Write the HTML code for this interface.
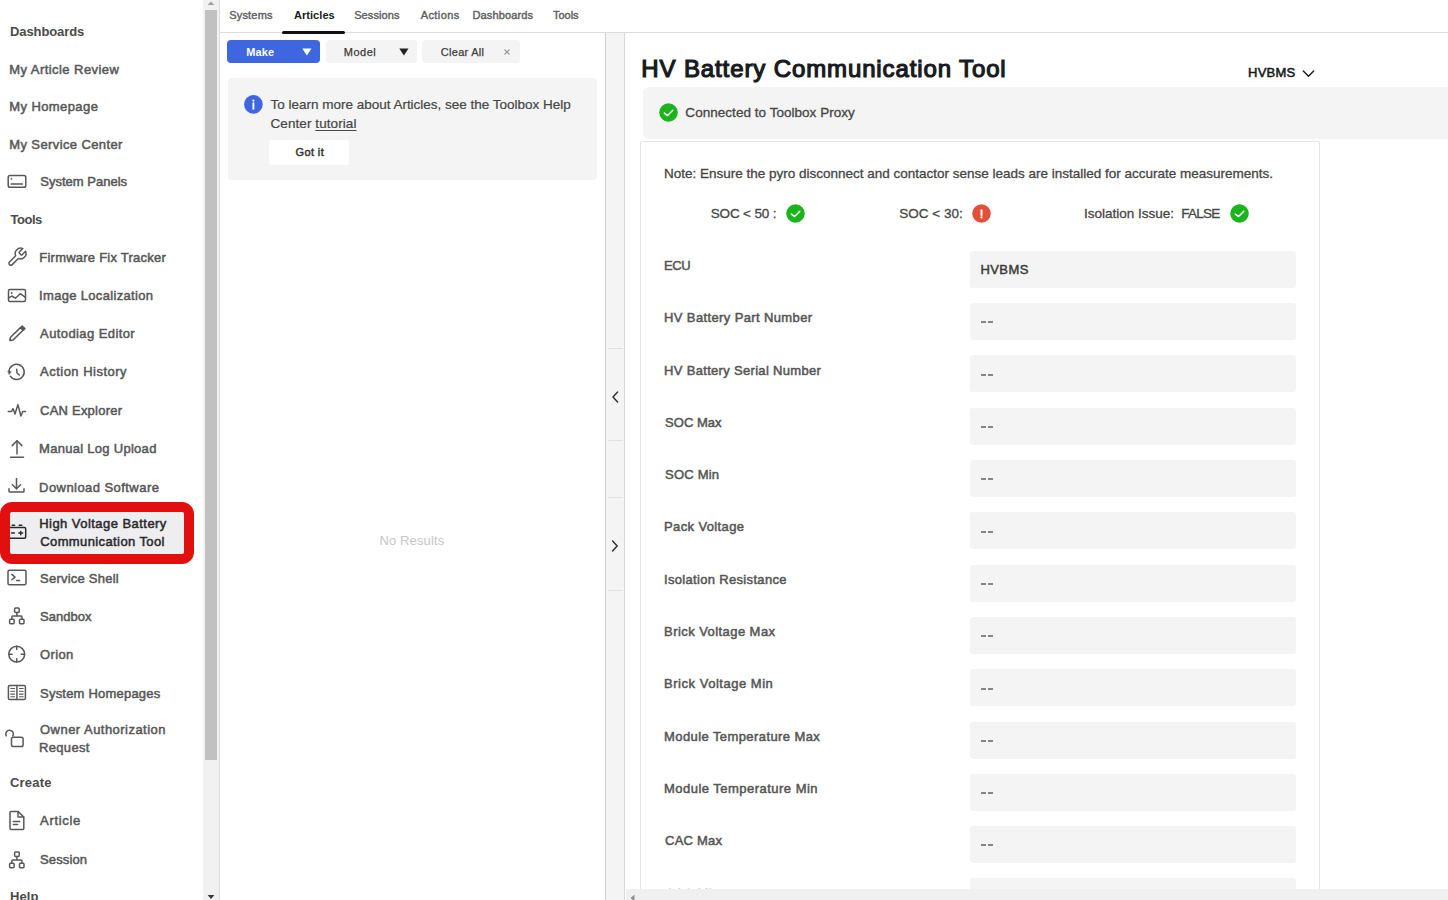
<!DOCTYPE html>
<html><head><meta charset="utf-8"><style>
html,body{margin:0;padding:0;width:1448px;height:900px;overflow:hidden;background:#fff;}
body{position:relative;font-family:"Liberation Sans", sans-serif;}
.t{position:absolute;white-space:nowrap;line-height:1;}
svg{overflow:visible;}
</style></head><body>
<div style="position:absolute;left:9.7px;top:512.3px;width:174.7px;height:41.4px;background:#eeeef0;"></div>
<div class="t" style="left:10.00px;top:25.20px;font-size:13px;font-weight:700;color:#4a4a4a;letter-spacing:-0.100px;">Dashboards</div>
<div class="t" style="left:9.25px;top:63.00px;font-size:13px;font-weight:400;color:#575757;letter-spacing:0.443px;-webkit-text-stroke:0.5px #575757;">My Article Review</div>
<div class="t" style="left:9.25px;top:100.10px;font-size:13px;font-weight:400;color:#575757;letter-spacing:0.409px;-webkit-text-stroke:0.5px #575757;">My Homepage</div>
<div class="t" style="left:9.25px;top:137.70px;font-size:13px;font-weight:400;color:#575757;letter-spacing:0.388px;-webkit-text-stroke:0.5px #575757;">My Service Center</div>
<div class="t" style="left:40.25px;top:174.80px;font-size:13px;font-weight:400;color:#575757;letter-spacing:0.008px;-webkit-text-stroke:0.5px #575757;">System Panels</div>
<div class="t" style="left:10.40px;top:212.80px;font-size:13px;font-weight:700;color:#4a4a4a;letter-spacing:-0.442px;">Tools</div>
<div class="t" style="left:39.25px;top:251.00px;font-size:13px;font-weight:400;color:#575757;letter-spacing:0.239px;-webkit-text-stroke:0.5px #575757;">Firmware Fix Tracker</div>
<div class="t" style="left:39.05px;top:288.60px;font-size:13px;font-weight:400;color:#575757;letter-spacing:0.325px;-webkit-text-stroke:0.5px #575757;">Image Localization</div>
<div class="t" style="left:40.05px;top:327.20px;font-size:13px;font-weight:400;color:#575757;letter-spacing:0.410px;-webkit-text-stroke:0.5px #575757;">Autodiag Editor</div>
<div class="t" style="left:40.05px;top:365.00px;font-size:13px;font-weight:400;color:#575757;letter-spacing:0.485px;-webkit-text-stroke:0.5px #575757;">Action History</div>
<div class="t" style="left:40.05px;top:403.50px;font-size:13px;font-weight:400;color:#575757;letter-spacing:0.224px;-webkit-text-stroke:0.5px #575757;">CAN Explorer</div>
<div class="t" style="left:39.05px;top:442.10px;font-size:13px;font-weight:400;color:#575757;letter-spacing:0.286px;-webkit-text-stroke:0.5px #575757;">Manual Log Upload</div>
<div class="t" style="left:39.05px;top:480.50px;font-size:13px;font-weight:400;color:#575757;letter-spacing:0.444px;-webkit-text-stroke:0.5px #575757;">Download Software</div>
<div class="t" style="left:39.25px;top:517.10px;font-size:13px;font-weight:400;color:#2a2a2c;letter-spacing:0.452px;-webkit-text-stroke:0.5px #2a2a2c;">High Voltage Battery</div>
<div class="t" style="left:40.25px;top:535.40px;font-size:13px;font-weight:400;color:#2a2a2c;letter-spacing:0.389px;-webkit-text-stroke:0.5px #2a2a2c;">Communication Tool</div>
<div class="t" style="left:40.05px;top:571.50px;font-size:13px;font-weight:400;color:#575757;letter-spacing:0.227px;-webkit-text-stroke:0.5px #575757;">Service Shell</div>
<div class="t" style="left:40.05px;top:609.80px;font-size:13px;font-weight:400;color:#575757;letter-spacing:0.013px;-webkit-text-stroke:0.5px #575757;">Sandbox</div>
<div class="t" style="left:40.05px;top:648.00px;font-size:13px;font-weight:400;color:#575757;letter-spacing:0.360px;-webkit-text-stroke:0.5px #575757;">Orion</div>
<div class="t" style="left:40.05px;top:686.80px;font-size:13px;font-weight:400;color:#575757;letter-spacing:0.210px;-webkit-text-stroke:0.5px #575757;">System Homepages</div>
<div class="t" style="left:40.05px;top:722.50px;font-size:13px;font-weight:400;color:#575757;letter-spacing:0.464px;-webkit-text-stroke:0.5px #575757;">Owner Authorization</div>
<div class="t" style="left:39.05px;top:741.00px;font-size:13px;font-weight:400;color:#575757;letter-spacing:0.315px;-webkit-text-stroke:0.5px #575757;">Request</div>
<div class="t" style="left:10.00px;top:776.40px;font-size:13px;font-weight:700;color:#4a4a4a;letter-spacing:0.213px;">Create</div>
<div class="t" style="left:40.05px;top:814.30px;font-size:13px;font-weight:400;color:#575757;letter-spacing:0.685px;-webkit-text-stroke:0.5px #575757;">Article</div>
<div class="t" style="left:40.05px;top:852.60px;font-size:13px;font-weight:400;color:#575757;letter-spacing:0.113px;-webkit-text-stroke:0.5px #575757;">Session</div>
<div class="t" style="left:10.00px;top:889.80px;font-size:13px;font-weight:700;color:#4a4a4a;letter-spacing:0.090px;">Help</div>
<svg style="position:absolute;left:7px;top:174px;" width="20" height="15" viewBox="0 0 20 15" fill="none" stroke="#5c5c5c" stroke-width="1.5" stroke-linecap="round" stroke-linejoin="round"><rect x="1.2" y="1.5" width="17.6" height="11.8" rx="1.8" stroke="#585858"/><path d="M4.2 9.9h11.2" stroke="#585858"/><circle cx="4.5" cy="4.8" r="0.9" fill="#585858" stroke="none"/></svg>
<svg style="position:absolute;left:6px;top:245.5px;" width="22" height="22" viewBox="0 0 22 22" fill="none" stroke="#5c5c5c" stroke-width="1.5" stroke-linecap="round" stroke-linejoin="round"><g transform="translate(0.2 0.3) scale(0.9)"><path d="M14.7 6.3a1 1 0 0 0 0 1.4l1.6 1.6a1 1 0 0 0 1.4 0l3.77-3.77a6 6 0 0 1-7.94 7.94l-6.91 6.91a2.12 2.12 0 0 1-3-3l6.91-6.91a6 6 0 0 1 7.94-7.94l-3.76 3.76z" stroke="#585858" stroke-width="1.65"/></g></svg>
<svg style="position:absolute;left:7px;top:288px;" width="20" height="15" viewBox="0 0 20 15" fill="none" stroke="#5c5c5c" stroke-width="1.5" stroke-linecap="round" stroke-linejoin="round"><rect x="1.5" y="1.5" width="17" height="12" rx="1.5" stroke="#585858"/><path d="M1.6 10.2L4.8 8l3.6 2.2 4.8-4.5 5.2 3.6" stroke="#585858"/><circle cx="4.7" cy="4.9" r="1" fill="#585858" stroke="none"/></svg>
<svg style="position:absolute;left:8px;top:324px;" width="19" height="19" viewBox="0 0 19 19" fill="none" stroke="#5c5c5c" stroke-width="1.5" stroke-linecap="round" stroke-linejoin="round"><path d="M1.8 16.6l0.8-3.3L12.4 3.6l2.6 2.6-9.8 9.7z" stroke="#585858"/><path d="M14.2 1.8l2.9 2.9-1.6 1.6-2.9-2.9z" fill="#585858" stroke="#585858" stroke-width="1.2"/></svg>
<svg style="position:absolute;left:7px;top:362.6px;" width="20" height="20" viewBox="0 0 20 20" fill="none" stroke="#5c5c5c" stroke-width="1.5" stroke-linecap="round" stroke-linejoin="round"><path d="M3.3 13.2A7.6 7.6 0 1 0 2 8.6" stroke="#585858"/><path d="M1.2 8.3l3 0.5-1.9 2.4z" fill="#585858" stroke="#585858" stroke-width="0.7"/><path d="M9.7 6.2l0.3 3.8 2.3 2" stroke="#585858"/></svg>
<svg style="position:absolute;left:7px;top:403px;" width="20" height="15" viewBox="0 0 20 15" fill="none" stroke="#5c5c5c" stroke-width="1.5" stroke-linecap="round" stroke-linejoin="round"><path d="M1.3 8.5H4.5L6 5.6 8 11 10.9 1.6 13.9 13 15.8 8.5H18.6" stroke="#585858"/></svg>
<svg style="position:absolute;left:8px;top:438px;" width="18" height="21" viewBox="0 0 18 21" fill="none" stroke="#5c5c5c" stroke-width="1.5" stroke-linecap="round" stroke-linejoin="round"><path d="M9 3v13" stroke="#585858"/><path d="M4.2 7.6L9 2.8l4.8 4.8" stroke="#585858"/><path d="M2.5 19.2h13" stroke="#585858"/></svg>
<svg style="position:absolute;left:7px;top:477px;" width="20" height="17" viewBox="0 0 20 17" fill="none" stroke="#5c5c5c" stroke-width="1.5" stroke-linecap="round" stroke-linejoin="round"><path d="M9.5 1.5v10.2" stroke="#585858"/><path d="M5.4 7.8l4.1 4 4.1-4" stroke="#585858"/><path d="M2 11.8v2.4a0.9 0.9 0 0 0 0.9 0.9h13.2a0.9 0.9 0 0 0 0.9-0.9v-2.4" stroke="#585858"/></svg>
<svg style="position:absolute;left:0px;top:520px;" width="28" height="22" viewBox="0 0 28 22" fill="none" stroke="#5c5c5c" stroke-width="1.5" stroke-linecap="round" stroke-linejoin="round"><path d="M12.2 5.2h2.4M19.2 5.2h2.6" stroke="#2a2a2a"/><rect x="4" y="7.6" width="21.7" height="10.7" rx="1.2" stroke="#2a2a2a"/><path d="M11.6 13.1h2.8M18.8 13.1h3.8M20.7 11.6v3.2" stroke="#2a2a2a"/></svg>
<div style="position:absolute;left:-0.5px;top:502px;width:194px;height:61.5px;border:10px solid #e20f0f;border-radius:12px;box-sizing:border-box;"></div>
<svg style="position:absolute;left:7px;top:569px;" width="20" height="17" viewBox="0 0 20 17" fill="none" stroke="#5c5c5c" stroke-width="1.5" stroke-linecap="round" stroke-linejoin="round"><rect x="1" y="1.2" width="18" height="14.5" rx="1.5" stroke="#585858"/><path d="M4.8 5.4l3.2 2.7-3.2 2.7" stroke="#585858"/><path d="M9.6 11.4h3" stroke="#585858"/></svg>
<svg style="position:absolute;left:8px;top:606px;" width="18" height="19" viewBox="0 0 18 19" fill="none" stroke="#5c5c5c" stroke-width="1.5" stroke-linecap="round" stroke-linejoin="round"><rect x="6.6" y="2.1" width="4.6" height="4.4" rx="0.9" stroke="#585858"/><rect x="1.6" y="13.3" width="4.5" height="4.4" rx="0.9" stroke="#585858"/><rect x="11.5" y="13.3" width="4.5" height="4.4" rx="0.9" stroke="#585858"/><path d="M8.9 6.5v3.4M3.85 13.3v-2.6a0.8 0.8 0 0 1 0.8-0.8h8.5a0.8 0.8 0 0 1 0.8 0.8v2.6" stroke="#585858"/></svg>
<svg style="position:absolute;left:7px;top:644px;" width="20" height="20" viewBox="0 0 20 20" fill="none" stroke="#5c5c5c" stroke-width="1.5" stroke-linecap="round" stroke-linejoin="round"><circle cx="9.7" cy="10.2" r="7.9" stroke="#585858"/><path d="M9.7 2.3v3.3M9.7 14.8v3.3M1.8 10.2h3.3M14.3 10.2h3.3" stroke="#585858"/></svg>
<svg style="position:absolute;left:7px;top:684px;" width="20" height="17" viewBox="0 0 20 17" fill="none" stroke="#5c5c5c" stroke-width="1.5" stroke-linecap="round" stroke-linejoin="round"><rect x="1.4" y="1.6" width="17" height="14" rx="1.4" stroke="#585858"/><path d="M9.9 1.6v14" stroke="#585858"/><path d="M3.8 4.5h3.8M3.8 7.3h3.8M3.8 10.1h3.8M3.8 12.8h3.8M12.4 4.5h3.8M12.4 7.3h3.8M12.4 10.1h3.8M12.4 12.8h3.8" stroke="#585858" stroke-width="1.1"/></svg>
<svg style="position:absolute;left:5px;top:729px;" width="20" height="19" viewBox="0 0 20 19" fill="none" stroke="#5c5c5c" stroke-width="1.5" stroke-linecap="round" stroke-linejoin="round"><path d="M1.24 6.78A3.8 3.8 0 1 1 7.83 7" stroke="#585858"/><rect x="6.5" y="8.2" width="11.6" height="9.4" rx="1.8" stroke="#585858"/></svg>
<svg style="position:absolute;left:8px;top:810px;" width="18" height="21" viewBox="0 0 18 21" fill="none" stroke="#5c5c5c" stroke-width="1.5" stroke-linecap="round" stroke-linejoin="round"><path d="M2 2.5a1 1 0 0 1 1-1h7.2l5.6 5.6v11.4a1 1 0 0 1-1 1H3a1 1 0 0 1-1-1z" stroke="#585858"/><path d="M10 1.5v5.6h5.6" stroke="#585858"/><path d="M5.3 11.5h6.4M5.3 14.5h4.3" stroke="#585858"/></svg>
<svg style="position:absolute;left:8px;top:849.5px;" width="18" height="19" viewBox="0 0 18 19" fill="none" stroke="#5c5c5c" stroke-width="1.5" stroke-linecap="round" stroke-linejoin="round"><rect x="6.6" y="2.1" width="4.6" height="4.4" rx="0.9" stroke="#585858"/><rect x="1.6" y="13.3" width="4.5" height="4.4" rx="0.9" stroke="#585858"/><rect x="11.5" y="13.3" width="4.5" height="4.4" rx="0.9" stroke="#585858"/><path d="M8.9 6.5v3.4M3.85 13.3v-2.6a0.8 0.8 0 0 1 0.8-0.8h8.5a0.8 0.8 0 0 1 0.8 0.8v2.6" stroke="#585858"/></svg>
<div style="position:absolute;left:202.5px;top:0px;width:16.5px;height:900px;background:#f1f1f1;"></div>
<div style="position:absolute;left:205px;top:10.3px;width:12px;height:749.5px;background:#c1c1c1;"></div>
<div style="position:absolute;left:219px;top:0px;width:1px;height:900px;background:#dcdcdc;"></div>
<svg style="position:absolute;left:205px;top:0px" width="12" height="10"><path d="M2.5 5L6 1.5 9.5 5z" fill="#a3a3a3"/></svg>
<svg style="position:absolute;left:205px;top:890px" width="12" height="10"><path d="M2.6 5L6 9 9.4 5z" fill="#3a3a3a"/></svg>
<div style="position:absolute;left:220px;top:32px;width:1228px;height:1px;background:#dcdcdc;"></div>
<div class="t" style="left:229.20px;top:10.19px;font-size:11px;font-weight:400;color:#5c5e62;letter-spacing:0.188px;-webkit-text-stroke:0.4px #5c5e62;">Systems</div>
<div class="t" style="left:293.90px;top:10.19px;font-size:11px;font-weight:700;color:#171a20;letter-spacing:0.066px;">Articles</div>
<div class="t" style="left:354.20px;top:10.19px;font-size:11px;font-weight:400;color:#5c5e62;letter-spacing:0.095px;-webkit-text-stroke:0.4px #5c5e62;">Sessions</div>
<div class="t" style="left:420.70px;top:10.19px;font-size:11px;font-weight:400;color:#5c5e62;letter-spacing:0.421px;-webkit-text-stroke:0.4px #5c5e62;">Actions</div>
<div class="t" style="left:472.40px;top:10.19px;font-size:11px;font-weight:400;color:#5c5e62;letter-spacing:0.143px;-webkit-text-stroke:0.4px #5c5e62;">Dashboards</div>
<div class="t" style="left:552.90px;top:10.19px;font-size:11px;font-weight:400;color:#5c5e62;letter-spacing:0.005px;-webkit-text-stroke:0.4px #5c5e62;">Tools</div>
<div style="position:absolute;left:282px;top:31px;width:63px;height:3px;background:#111;border-radius:2px;"></div>
<div style="position:absolute;left:227px;top:40px;width:93px;height:23px;background:#3e66df;border-radius:4px;"></div>
<div class="t" style="left:246.20px;top:46.69px;font-size:11px;font-weight:700;color:#ffffff;letter-spacing:0.101px;">Make</div>
<svg style="position:absolute;left:302px;top:48px" width="10" height="8"><path d="M0.3 0.6h9.2L4.9 7.6z" fill="#fff"/></svg>
<div style="position:absolute;left:325.7px;top:40px;width:91.5px;height:23px;background:#f4f4f4;border-radius:4px;"></div>
<div class="t" style="left:343.73px;top:46.69px;font-size:11px;font-weight:400;color:#3a3a3a;letter-spacing:0.508px;-webkit-text-stroke:0.25px #3a3a3a;">Model</div>
<svg style="position:absolute;left:399px;top:48px" width="10" height="8"><path d="M0.3 0.6h9.2L4.9 7.6z" fill="#222"/></svg>
<div style="position:absolute;left:422px;top:40px;width:97.5px;height:23px;background:#f4f4f4;border-radius:4px;"></div>
<div class="t" style="left:440.82px;top:46.69px;font-size:11px;font-weight:400;color:#3a3a3a;letter-spacing:0.278px;-webkit-text-stroke:0.25px #3a3a3a;">Clear All</div>
<svg style="position:absolute;left:503px;top:47.8px" width="8" height="8"><path d="M1.5 1.5l5 5M6.5 1.5l-5 5" stroke="#9a9a9a" stroke-width="1.1"/></svg>
<div style="position:absolute;left:227.6px;top:78.3px;width:369px;height:101.5px;background:#f4f4f4;border-radius:4px;"></div>
<svg style="position:absolute;left:244px;top:95px" width="19" height="19"><circle cx="9.4" cy="9.4" r="9.3" fill="#3e66df"/><circle cx="9.4" cy="5.6" r="1.1" fill="#fff"/><path d="M9.4 8.2v5.6" stroke="#fff" stroke-width="1.9" stroke-linecap="round"/></svg>
<div class="t" style="left:270.50px;top:97.97px;font-size:13.5px;font-weight:400;color:#454545;letter-spacing:-0.009px;-webkit-text-stroke:0.2px #454545;">To learn more about Articles, see the Toolbox Help</div>
<div class="t" style="left:270.50px;top:116.57px;font-size:13.5px;font-weight:400;color:#454545;letter-spacing:0.079px;-webkit-text-stroke:0.2px #454545;">Center <span style="text-decoration:underline;text-underline-offset:2px">tutorial</span></div>
<div style="position:absolute;left:269px;top:139.8px;width:80px;height:25.5px;background:#ffffff;border-radius:3px;"></div>
<div class="t" style="left:295.53px;top:146.59px;font-size:11px;font-weight:400;color:#333;letter-spacing:0.384px;-webkit-text-stroke:0.45px #333;">Got it</div>
<div class="t" style="left:379.50px;top:533.70px;font-size:13px;font-weight:400;color:#c6c6c6;letter-spacing:0.125px;">No Results</div>
<div style="position:absolute;left:605px;top:33px;width:1px;height:867px;background:#d2d2d2;"></div>
<div style="position:absolute;left:606px;top:33px;width:18px;height:867px;background:#f4f4f4;"></div>
<div style="position:absolute;left:624px;top:33px;width:1px;height:867px;background:#d8d8d8;"></div>
<div style="position:absolute;left:608px;top:348px;width:15px;height:1px;background:#e0e0e0;"></div>
<div style="position:absolute;left:608px;top:440px;width:15px;height:1px;background:#e0e0e0;"></div>
<div style="position:absolute;left:608px;top:497px;width:15px;height:1px;background:#e0e0e0;"></div>
<div style="position:absolute;left:608px;top:590px;width:15px;height:1px;background:#e0e0e0;"></div>
<svg style="position:absolute;left:610px;top:390px" width="10" height="14"><path d="M7.6 2L3 7l4.6 5" stroke="#333" stroke-width="1.5" fill="none" stroke-linecap="round" stroke-linejoin="round"/></svg>
<svg style="position:absolute;left:610px;top:539px" width="10" height="14"><path d="M2.6 2l4.6 5-4.6 5" stroke="#333" stroke-width="1.5" fill="none" stroke-linecap="round" stroke-linejoin="round"/></svg>
<div class="t" style="left:641.30px;top:56.88px;font-size:24px;font-weight:400;color:#171a20;letter-spacing:0.882px;-webkit-text-stroke:1.2px #171a20;">HV Battery Communication Tool</div>
<div class="t" style="left:1247.98px;top:66.40px;font-size:13px;font-weight:400;color:#171a20;letter-spacing:0.273px;-webkit-text-stroke:0.55px #171a20;">HVBMS</div>
<svg style="position:absolute;left:1301.5px;top:69.5px" width="13" height="9"><path d="M1.3 1.1l5.2 5.2 5.2-5.2" stroke="#171a20" stroke-width="1.4" fill="none" stroke-linecap="round" stroke-linejoin="round"/></svg>
<div style="position:absolute;left:642.5px;top:87px;width:810px;height:51.5px;background:#f4f4f4;border-radius:6px;"></div>
<svg style="position:absolute;left:658.8px;top:103.4px" width="19" height="19"><circle cx="9.5" cy="9.5" r="9.3" fill="#1bb41b"/><path d="M5.3 10.1l3.3 2.5 5.2-5.4" stroke="#fff" stroke-width="1.4" fill="none" stroke-linecap="round" stroke-linejoin="round"/></svg>
<div class="t" style="left:685.35px;top:106.27px;font-size:13.5px;font-weight:400;color:#454545;letter-spacing:0.036px;-webkit-text-stroke:0.3px #454545;">Connected to Toolbox Proxy</div>
<div style="position:absolute;left:640px;top:141px;width:680px;height:800px;border:1px solid #e4e4e4;border-radius:2px;background:#fff;box-sizing:border-box;"></div>
<div class="t" style="left:664.05px;top:167.27px;font-size:13.5px;font-weight:400;color:#454545;letter-spacing:-0.003px;-webkit-text-stroke:0.3px #454545;">Note: Ensure the pyro disconnect and contactor sense leads are installed for accurate measurements.</div>
<div class="t" style="left:710.65px;top:206.67px;font-size:13.5px;font-weight:400;color:#454545;letter-spacing:-0.134px;-webkit-text-stroke:0.3px #454545;">SOC &lt; 50 :</div>
<svg style="position:absolute;left:785.8px;top:203.5px" width="19" height="19"><circle cx="9.5" cy="9.5" r="9.3" fill="#1bb41b"/><path d="M5.3 10.1l3.3 2.5 5.2-5.4" stroke="#fff" stroke-width="1.4" fill="none" stroke-linecap="round" stroke-linejoin="round"/></svg>
<div class="t" style="left:899.15px;top:206.67px;font-size:13.5px;font-weight:400;color:#454545;letter-spacing:0.031px;-webkit-text-stroke:0.3px #454545;">SOC &lt; 30:</div>
<svg style="position:absolute;left:972px;top:204px" width="19" height="19"><circle cx="9.5" cy="9.5" r="9.3" fill="#e3503a"/><path d="M9.5 6.3v4.6" stroke="#fff" stroke-width="2" stroke-linecap="round"/><circle cx="9.5" cy="13.4" r="1.1" fill="#fff"/></svg>
<div class="t" style="left:1083.95px;top:206.67px;font-size:13.5px;font-weight:400;color:#454545;letter-spacing:0.007px;-webkit-text-stroke:0.3px #454545;">Isolation Issue:</div>
<div class="t" style="left:1181.25px;top:206.67px;font-size:13.5px;font-weight:400;color:#454545;letter-spacing:-0.730px;-webkit-text-stroke:0.3px #454545;">FALSE</div>
<svg style="position:absolute;left:1229.8px;top:203.5px" width="19" height="19"><circle cx="9.5" cy="9.5" r="9.3" fill="#1bb41b"/><path d="M5.3 10.1l3.3 2.5 5.2-5.4" stroke="#fff" stroke-width="1.4" fill="none" stroke-linecap="round" stroke-linejoin="round"/></svg>
<div style="position:absolute;left:969.6px;top:250.8px;width:326.7px;height:37px;background:#f4f4f4;border-radius:3px;"></div>
<div class="t" style="left:664.05px;top:258.90px;font-size:13px;font-weight:400;color:#555555;letter-spacing:-0.380px;-webkit-text-stroke:0.5px #555555;">ECU</div>
<div class="t" style="left:980.43px;top:263.00px;font-size:13px;font-weight:400;color:#3a3a3a;letter-spacing:0.423px;-webkit-text-stroke:0.45px #3a3a3a;">HVBMS</div>
<div style="position:absolute;left:969.6px;top:303.1px;width:326.7px;height:37px;background:#f4f4f4;border-radius:3px;"></div>
<div class="t" style="left:664.05px;top:311.20px;font-size:13px;font-weight:400;color:#555555;letter-spacing:0.375px;-webkit-text-stroke:0.5px #555555;">HV Battery Part Number</div>
<div style="position:absolute;left:981px;top:321px;width:5px;height:2px;background:#858585;"></div>
<div style="position:absolute;left:988px;top:321px;width:4.5px;height:2px;background:#858585;"></div>
<div style="position:absolute;left:969.6px;top:355.4px;width:326.7px;height:37px;background:#f4f4f4;border-radius:3px;"></div>
<div class="t" style="left:664.05px;top:363.50px;font-size:13px;font-weight:400;color:#555555;letter-spacing:0.316px;-webkit-text-stroke:0.5px #555555;">HV Battery Serial Number</div>
<div style="position:absolute;left:981px;top:374px;width:5px;height:2px;background:#858585;"></div>
<div style="position:absolute;left:988px;top:374px;width:4.5px;height:2px;background:#858585;"></div>
<div style="position:absolute;left:969.6px;top:407.7px;width:326.7px;height:37px;background:#f4f4f4;border-radius:3px;"></div>
<div class="t" style="left:665.05px;top:415.80px;font-size:13px;font-weight:400;color:#555555;letter-spacing:0.026px;-webkit-text-stroke:0.5px #555555;">SOC Max</div>
<div style="position:absolute;left:981px;top:426px;width:5px;height:2px;background:#858585;"></div>
<div style="position:absolute;left:988px;top:426px;width:4.5px;height:2px;background:#858585;"></div>
<div style="position:absolute;left:969.6px;top:460.0px;width:326.7px;height:37px;background:#f4f4f4;border-radius:3px;"></div>
<div class="t" style="left:665.05px;top:468.10px;font-size:13px;font-weight:400;color:#555555;letter-spacing:0.200px;-webkit-text-stroke:0.5px #555555;">SOC Min</div>
<div style="position:absolute;left:981px;top:478px;width:5px;height:2px;background:#858585;"></div>
<div style="position:absolute;left:988px;top:478px;width:4.5px;height:2px;background:#858585;"></div>
<div style="position:absolute;left:969.6px;top:512.3px;width:326.7px;height:37px;background:#f4f4f4;border-radius:3px;"></div>
<div class="t" style="left:664.05px;top:520.40px;font-size:13px;font-weight:400;color:#555555;letter-spacing:0.368px;-webkit-text-stroke:0.5px #555555;">Pack Voltage</div>
<div style="position:absolute;left:981px;top:531px;width:5px;height:2px;background:#858585;"></div>
<div style="position:absolute;left:988px;top:531px;width:4.5px;height:2px;background:#858585;"></div>
<div style="position:absolute;left:969.6px;top:564.6px;width:326.7px;height:37px;background:#f4f4f4;border-radius:3px;"></div>
<div class="t" style="left:664.05px;top:572.70px;font-size:13px;font-weight:400;color:#555555;letter-spacing:0.321px;-webkit-text-stroke:0.5px #555555;">Isolation Resistance</div>
<div style="position:absolute;left:981px;top:583px;width:5px;height:2px;background:#858585;"></div>
<div style="position:absolute;left:988px;top:583px;width:4.5px;height:2px;background:#858585;"></div>
<div style="position:absolute;left:969.6px;top:616.9px;width:326.7px;height:37px;background:#f4f4f4;border-radius:3px;"></div>
<div class="t" style="left:664.05px;top:625.00px;font-size:13px;font-weight:400;color:#555555;letter-spacing:0.435px;-webkit-text-stroke:0.5px #555555;">Brick Voltage Max</div>
<div style="position:absolute;left:981px;top:635px;width:5px;height:2px;background:#858585;"></div>
<div style="position:absolute;left:988px;top:635px;width:4.5px;height:2px;background:#858585;"></div>
<div style="position:absolute;left:969.6px;top:669.2px;width:326.7px;height:37px;background:#f4f4f4;border-radius:3px;"></div>
<div class="t" style="left:664.05px;top:677.30px;font-size:13px;font-weight:400;color:#555555;letter-spacing:0.519px;-webkit-text-stroke:0.5px #555555;">Brick Voltage Min</div>
<div style="position:absolute;left:981px;top:688px;width:5px;height:2px;background:#858585;"></div>
<div style="position:absolute;left:988px;top:688px;width:4.5px;height:2px;background:#858585;"></div>
<div style="position:absolute;left:969.6px;top:721.5px;width:326.7px;height:37px;background:#f4f4f4;border-radius:3px;"></div>
<div class="t" style="left:664.05px;top:729.60px;font-size:13px;font-weight:400;color:#555555;letter-spacing:0.410px;-webkit-text-stroke:0.5px #555555;">Module Temperature Max</div>
<div style="position:absolute;left:981px;top:740px;width:5px;height:2px;background:#858585;"></div>
<div style="position:absolute;left:988px;top:740px;width:4.5px;height:2px;background:#858585;"></div>
<div style="position:absolute;left:969.6px;top:773.8px;width:326.7px;height:37px;background:#f4f4f4;border-radius:3px;"></div>
<div class="t" style="left:664.05px;top:781.90px;font-size:13px;font-weight:400;color:#555555;letter-spacing:0.473px;-webkit-text-stroke:0.5px #555555;">Module Temperature Min</div>
<div style="position:absolute;left:981px;top:792px;width:5px;height:2px;background:#858585;"></div>
<div style="position:absolute;left:988px;top:792px;width:4.5px;height:2px;background:#858585;"></div>
<div style="position:absolute;left:969.6px;top:826.1px;width:326.7px;height:37px;background:#f4f4f4;border-radius:3px;"></div>
<div class="t" style="left:665.05px;top:834.20px;font-size:13px;font-weight:400;color:#555555;letter-spacing:0.230px;-webkit-text-stroke:0.5px #555555;">CAC Max</div>
<div style="position:absolute;left:981px;top:844px;width:5px;height:2px;background:#858585;"></div>
<div style="position:absolute;left:988px;top:844px;width:4.5px;height:2px;background:#858585;"></div>
<div style="position:absolute;left:969.6px;top:878.4px;width:326.7px;height:37px;background:#f4f4f4;border-radius:3px;"></div>
<div class="t" style="left:665.05px;top:886.50px;font-size:13px;font-weight:400;color:#555555;letter-spacing:0.371px;-webkit-text-stroke:0.5px #555555;">CAC Min</div>
<div style="position:absolute;left:981px;top:897px;width:5px;height:2px;background:#858585;"></div>
<div style="position:absolute;left:988px;top:897px;width:4.5px;height:2px;background:#858585;"></div>
<div style="position:absolute;left:626px;top:889px;width:822px;height:11px;background:#f0f0f0;"></div>
<svg style="position:absolute;left:628px;top:892.5px" width="8" height="9"><path d="M6.5 1.5L2.5 5l4 3.5z" fill="#909090"/></svg>
</body></html>
